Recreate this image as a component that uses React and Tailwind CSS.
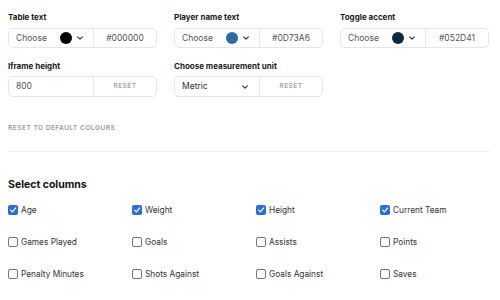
import React from "react";

const font = { fontFamily: "Inter, 'Noto Sans', sans-serif" };

function Chevron() {
  return (
    <svg width="8" height="8" viewBox="0 0 10 10" className="text-[#333]">
      <path d="M2 3.5 L5 6.5 L8 3.5" fill="none" stroke="currentColor" strokeWidth="1.4" strokeLinecap="round" strokeLinejoin="round" />
    </svg>
  );
}

function ColorField({ label, color, hex }) {
  return (
    <div className="flex flex-col">
      <div className="text-[8px] font-bold text-[#1a1a1a] h-[12px] leading-[12px] mb-[5px] mt-[1px]">{label}</div>
      <div className="flex h-[20px] border border-[#e6e6e6] rounded-[5px]">
        <div className="w-[85px] flex items-center pl-[7px] pr-[9px] border-r border-[#e6e6e6]">
          <span className="text-[8.5px] text-[#555]">Choose</span>
          <span className="ml-auto w-[12px] h-[12px] rounded-full" style={{ background: color }} />
          <span className="ml-[4px] flex items-center"><Chevron /></span>
        </div>
        <div className="flex-1 flex items-center justify-center text-[8.5px] text-[#555]">{hex}</div>
      </div>
    </div>
  );
}

function ResetField({ label, children }) {
  return (
    <div className="flex flex-col">
      <div className="text-[8px] font-bold text-[#1a1a1a] h-[12px] leading-[12px] mb-[4px]">{label}</div>
      <div className="flex h-[21px] border border-[#e6e6e6] rounded-[5px]">
        <div className="w-[85px] flex items-center pl-[7px] pr-[10px] border-r border-[#e6e6e6]">{children}</div>
        <div className="flex-1 flex items-center justify-center text-[6.5px] font-semibold tracking-[0.08em] text-[#a3a3a3]">RESET</div>
      </div>
    </div>
  );
}

function Check({ label, checked }) {
  return (
    <div className="flex items-center h-[32px]">
      {checked ? (
        <span className="w-[10px] h-[10px] rounded-[2px] bg-[#2a6fd1] flex items-center justify-center">
          <svg width="8" height="8" viewBox="0 0 10 10">
            <path d="M2 5.2 L4.2 7.4 L8.2 2.6" fill="none" stroke="white" strokeWidth="1.6" strokeLinecap="round" strokeLinejoin="round" />
          </svg>
        </span>
      ) : (
        <span className="w-[10px] h-[10px] rounded-[2px] border border-[#767676] bg-white" />
      )}
      <span className="ml-[3px] text-[8.3px] text-[#333]">{label}</span>
    </div>
  );
}

export default function App() {
  const cols = [
    ["Age", true], ["Weight", true], ["Height", true], ["Current Team", true],
    ["Games Played", false], ["Goals", false], ["Assists", false], ["Points", false],
    ["Penalty Minutes", false], ["Shots Against", false], ["Goals Against", false], ["Saves", false],
  ];
  return (
    <div className="w-[500px] h-[300px] bg-white pl-[8px] pr-[11px] pt-[10px] overflow-hidden" style={font}>
      <div className="grid grid-cols-3 gap-x-[17px] gap-y-[12px]">
        <ColorField label="Table text" color="#000000" hex="#000000" />
        <ColorField label="Player name text" color="#2f6aa6" hex="#0D73A6" />
        <ColorField label="Toggle accent" color="#0f2a40" hex="#052D41" />
        <ResetField label="Iframe height">
          <span className="text-[8.5px] text-[#555]">800</span>
        </ResetField>
        <ResetField label="Choose measurement unit">
          <span className="text-[8.5px] text-[#333]">Metric</span>
          <span className="ml-auto flex items-center"><Chevron /></span>
        </ResetField>
      </div>
      <div className="mt-[26px] text-[6.5px] font-semibold tracking-[0.08em] text-[#9a9a9a] leading-[10px]">RESET TO DEFAULT COLOURS</div>
      <div className="mt-[18px] h-[1px] bg-[#efefef]" />
      <div className="mt-[26px] text-[10.5px] font-bold text-[#111] leading-[14px]">Select columns</div>
      <div className="mt-[2px] grid grid-cols-4 gap-x-[15px]">
        {cols.map(([l, c]) => <Check key={l} label={l} checked={c} />)}
      </div>
    </div>
  );
}
